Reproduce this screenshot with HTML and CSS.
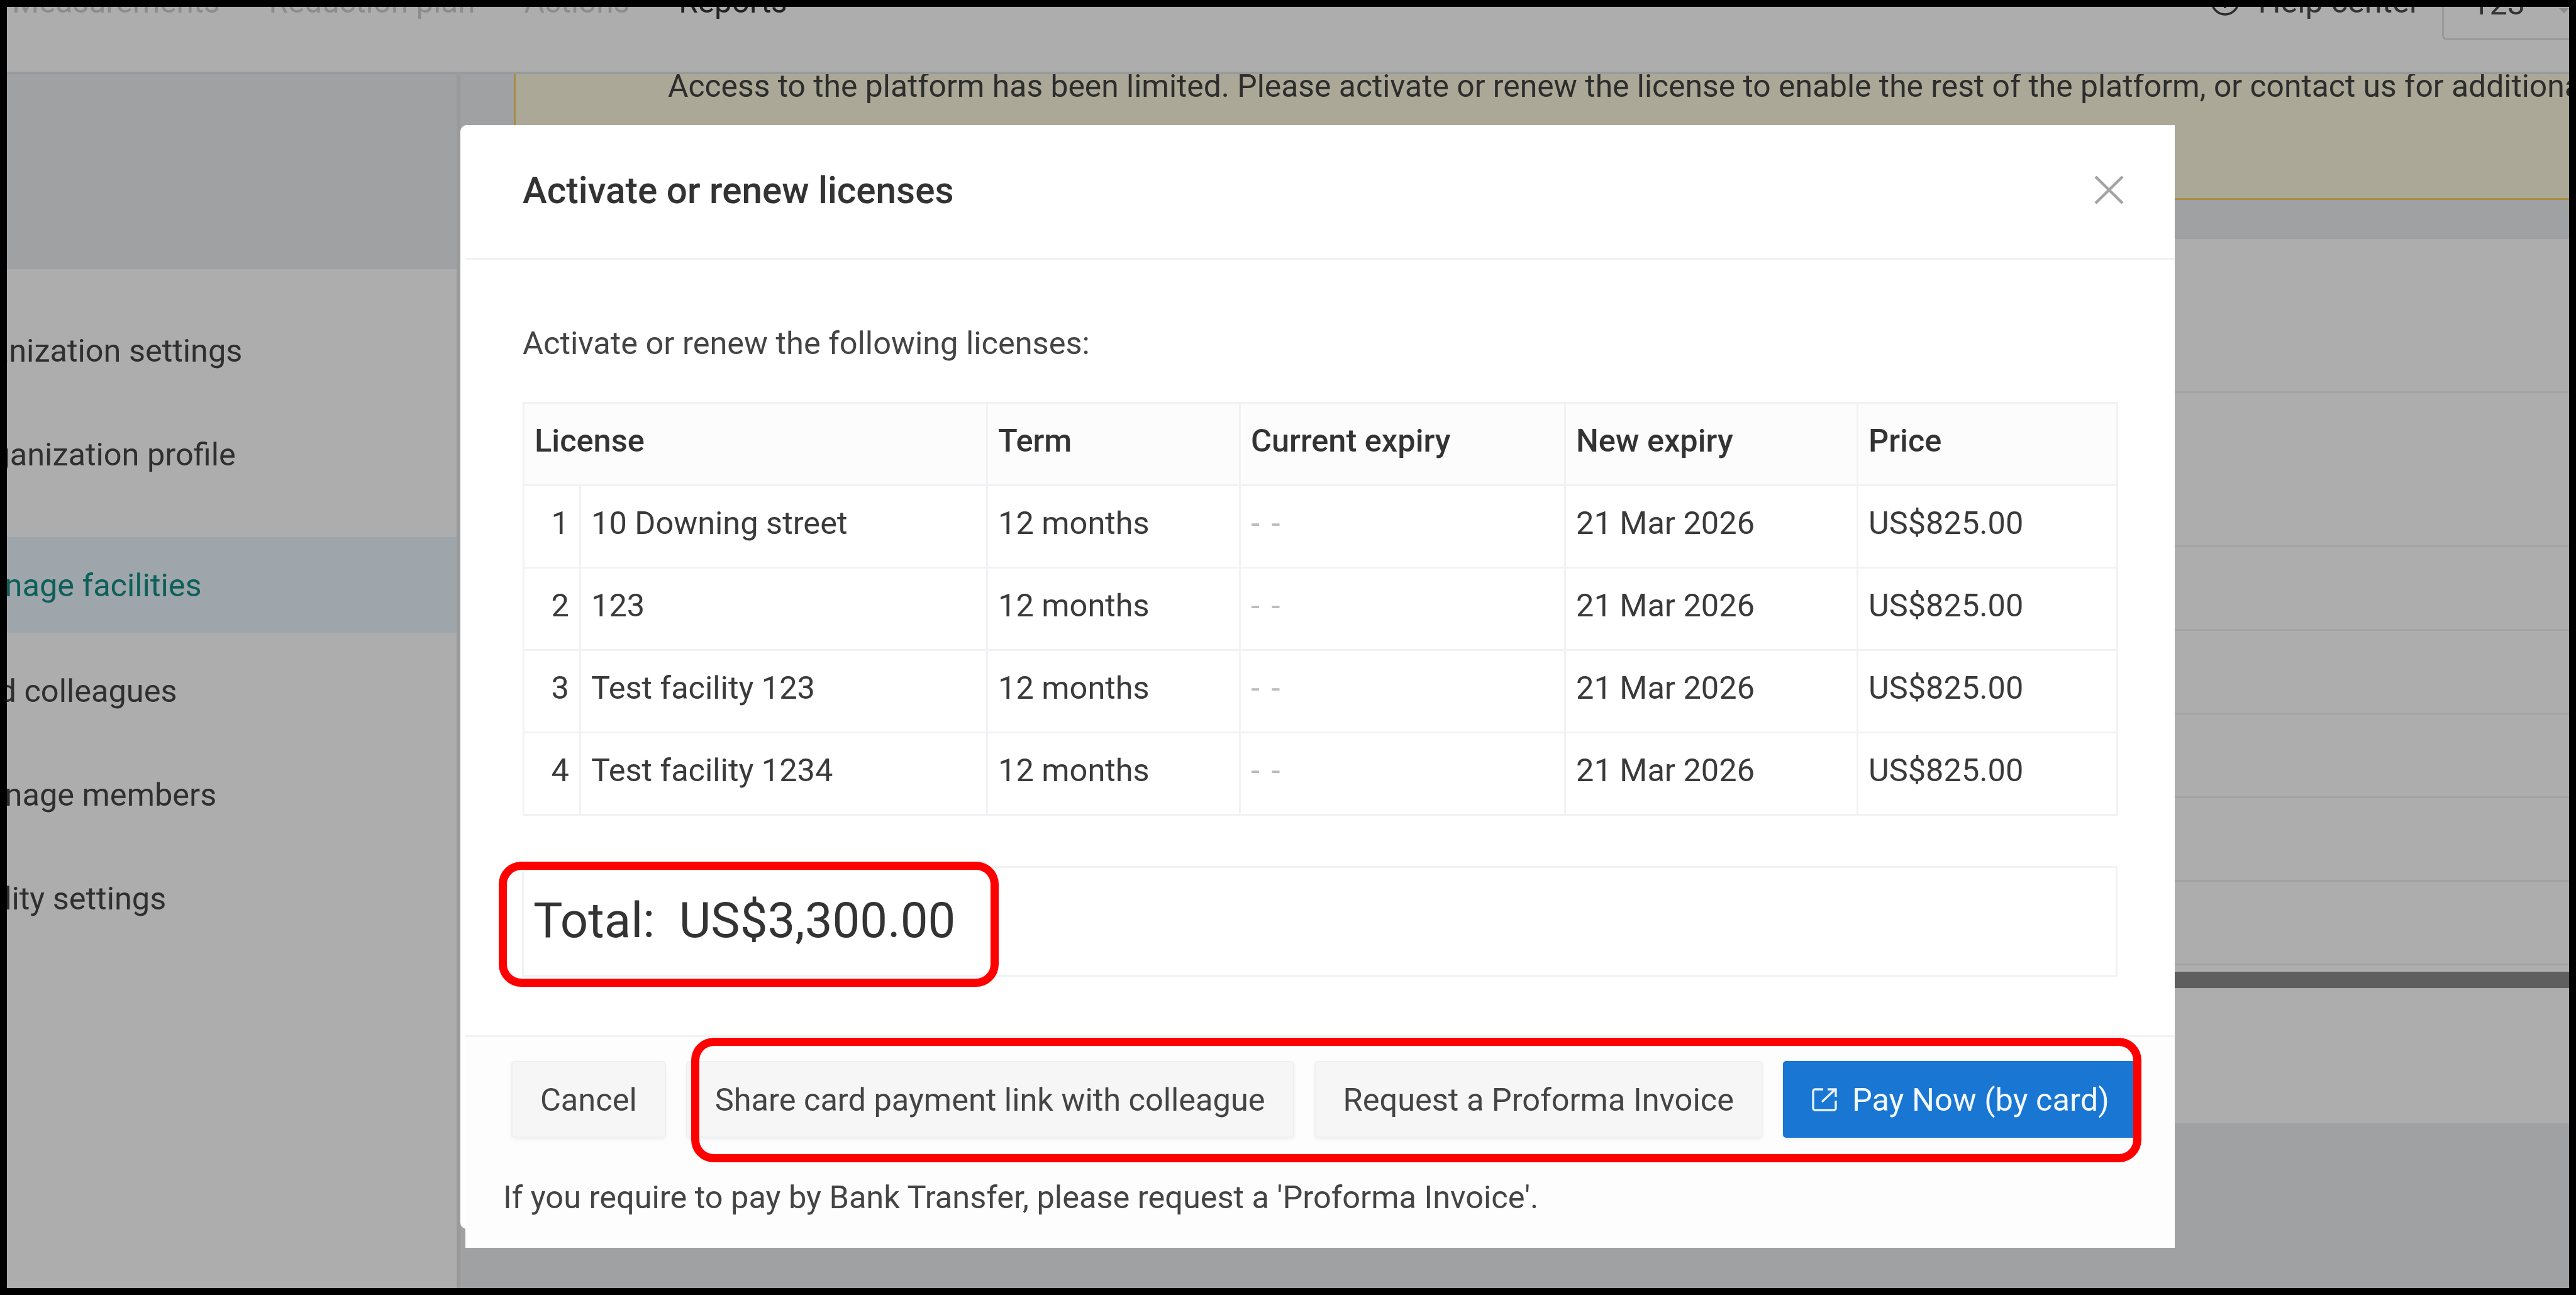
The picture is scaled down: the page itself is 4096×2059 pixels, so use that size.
FILE: index.html
```html
<!DOCTYPE html>
<html lang="en">
<head>
    <meta charset="UTF-8">
    <title>Activate or renew licenses</title>
    <link rel="stylesheet" href="styles.css">
</head>
<body>
    <div class="page">
        <header class="topbar">
            <nav class="topnav">
                <span class="nav-item">Measurements</span>
                <span class="nav-item">Reduction plan</span>
                <span class="nav-item">Actions</span>
                <span class="nav-item current">Reports</span>
                <span class="nav-caret"></span>
            </nav>
            <div class="topright">
                <svg class="help-icon" viewBox="0 0 46 46"><circle cx="23" cy="23" r="21" fill="none" stroke="#2b2b2b" stroke-width="3.5"/><path d="M23 21v13" stroke="#2b2b2b" stroke-width="4"/></svg>
                <span class="help-text">Help center</span>
                <div class="org-select"><span>123</span><span class="nav-caret grey"></span></div>
            </div>
        </header>

        <div class="main">
            <aside class="sidebar">
                <div class="side-head"></div>
                <ul class="side-menu">
                    <li class="side-item heading">Organization settings</li>
                    <li class="side-item">Organization profile</li>
                    <li class="side-item active">Manage facilities</li>
                    <li class="side-item">Add colleagues</li>
                    <li class="side-item">Manage members</li>
                    <li class="side-item heading">Validity settings</li>
                </ul>
            </aside>
            <section class="content">
                <div class="banner">
                    <p>Access to the platform has been limited. Please activate or renew the license to enable the rest of the platform, or contact us for additional support.</p>
                </div>
                <div class="panel">
                    <div class="panel-row tall"></div>
                    <div class="panel-row tall"></div>
                    <div class="panel-row"></div>
                    <div class="panel-row"></div>
                    <div class="panel-row"></div>
                    <div class="panel-row"></div>
                    <div class="panel-row"></div>
                    <div class="scrollbar"></div>
                </div>
            </section>
        </div>

        <div class="modal-back"></div>
        <div class="modal">
            <div class="modal-head">
                <h2>Activate or renew licenses</h2>
                <svg class="close" viewBox="0 0 47 44" preserveAspectRatio="none"><path d="M2 1l43 42M45 1L2 43" stroke="#a3a3a3" stroke-width="4.5" fill="none"/></svg>
            </div>
            <div class="modal-body">
                <p class="intro">Activate or renew the following licenses:</p>
                <table class="licenses">
                    <colgroup>
                        <col class="col-num">
                        <col class="col-name">
                        <col class="col-term">
                        <col class="col-current">
                        <col class="col-new">
                        <col class="col-price">
                    </colgroup>
                    <thead>
                        <tr>
                            <th colspan="2">License</th>
                            <th>Term</th>
                            <th>Current expiry</th>
                            <th>New expiry</th>
                            <th>Price</th>
                        </tr>
                    </thead>
                    <tbody>
                        <tr>
                            <td class="num">1</td>
                            <td>10 Downing street</td>
                            <td>12 months</td>
                            <td class="none">- -</td>
                            <td>21 Mar 2026</td>
                            <td>US$825.00</td>
                        </tr>
                        <tr>
                            <td class="num">2</td>
                            <td>123</td>
                            <td>12 months</td>
                            <td class="none">- -</td>
                            <td>21 Mar 2026</td>
                            <td>US$825.00</td>
                        </tr>
                        <tr>
                            <td class="num">3</td>
                            <td>Test facility 123</td>
                            <td>12 months</td>
                            <td class="none">- -</td>
                            <td>21 Mar 2026</td>
                            <td>US$825.00</td>
                        </tr>
                        <tr>
                            <td class="num">4</td>
                            <td>Test facility 1234</td>
                            <td>12 months</td>
                            <td class="none">- -</td>
                            <td>21 Mar 2026</td>
                            <td>US$825.00</td>
                        </tr>
                    </tbody>
                </table>
                <div class="total">Total:&nbsp; US$3,300.00</div>
            </div>
            <div class="modal-foot">
                <div class="buttons">
                    <button class="btn">Cancel</button>
                    <button class="btn">Share card payment link with colleague</button>
                    <button class="btn">Request a Proforma Invoice</button>
                    <button class="btn primary">
                        <svg class="ext-icon" viewBox="0 0 40 38"><path d="M18 3H5a3 3 0 0 0-3 3v27a3 3 0 0 0 3 3h30a3 3 0 0 0 3-3V21" fill="none" stroke="#e8f1fb" stroke-width="3.4"/><path d="M16 23L36 4M25 3h13v12" fill="none" stroke="#e8f1fb" stroke-width="3.4"/></svg>
                        Pay Now (by card)
                    </button>
                </div>
                <p class="note">If you require to pay by Bank Transfer, please request a 'Proforma Invoice'.</p>
            </div>
        </div>

        <div class="mark mark-total"></div>
        <div class="mark mark-buttons"></div>
    </div>
</body>
</html>
```

FILE: styles.css
```css
html, body {
    margin: 0;
    height: 100%;
    overflow: hidden;
}

body {
    font-family: Roboto, "Liberation Sans", sans-serif;
    color: #3a3a3a;
}

.page {
    position: relative;
    width: 4096px;
    height: 2059px;
    box-sizing: border-box;
    border: 11px solid #000;
    background: #a0a1a3;
    overflow: hidden;
}

/* top bar, pushed up so only the lower part of the text shows */
.topbar {
    height: 107px;
    box-sizing: border-box;
    background: #adadad;
    border-bottom: 4px solid #989b9b;
    display: flex;
    justify-content: space-between;
    overflow: hidden;
}

.topnav {
    display: flex;
    align-items: center;
    gap: 78px;
    height: 20px;
    margin-top: -18px;
    font-size: 49.5px;
    color: #8c8c8c;
    padding-left: 8px;
}

.nav-item { white-space: nowrap; }
.nav-item.current { color: #222; }

.nav-caret {
    width: 0;
    height: 0;
    margin-left: -33px;
    border: 8px solid transparent;
    border-top-color: #333;
    border-bottom: 0;
}

.topright {
    display: flex;
    align-items: flex-start;
    margin-top: -30px;
    font-size: 50.5px;
    line-height: 44px;
    color: #333;
}

.help-icon {
    width: 46px;
    height: 46px;
    margin: -2px 30px 0 0;
}

.help-text {
    white-space: nowrap;
    margin-right: 35px;
}

.org-select {
    width: 202px;
    height: 83px;
    box-sizing: border-box;
    padding-left: 44px;
    border: 3px solid #999;
    border-right: 0;
    border-radius: 8px 0 0 8px;
    display: flex;
    align-items: flex-start;
}

.org-select .nav-caret.grey {
    margin: 29px 0 0 54px;
    border-top-color: #8c8c8c;
}

.main {
    display: flex;
    height: 1930px;
}

.sidebar {
    width: 715px;
    flex: none;
    background: #adadad;
    border-right: 6px solid #9a9a9a;
    overflow: hidden;
}

.side-head {
    height: 310px;
    background: #a0a1a3;
}

.side-menu {
    list-style: none;
    margin: 0;
    padding: 47px 0 0;
    font-size: 50.5px;
    color: #2f2f2f;
}

.side-item {
    height: 165px;
    display: flex;
    align-items: center;
    white-space: nowrap;
    margin-left: -75px;
}

.side-item.heading { margin-left: -104px; }

.side-item.active {
    height: 152px;
    margin-top: 49px;
    margin-bottom: 10px;
    color: #0d5f5a;
    background: #9ea6ab;
}

.content {
    flex: 1;
    min-width: 0;
    overflow: hidden;
}

.banner {
    height: 200px;
    box-sizing: border-box;
    margin-left: 85px;
    padding-left: 242px;
    background: #aba897;
    border-left: 3px solid #a88d45;
    border-bottom: 3px solid #a88d45;
    font-size: 49.8px;
    color: #2d2d2d;
    overflow: hidden;
}

.banner p {
    margin: -13px 0 0;
    white-space: nowrap;
    line-height: 64px;
}

.panel {
    margin-top: 62px;
    height: 1406px;
    background: #adadad;
}

.panel-row {
    height: 133px;
    box-sizing: border-box;
    border-bottom: 3px solid #a3a3a3;
}

.panel-row.tall { height: 245px; }

.scrollbar {
    height: 26px;
    margin-top: 10px;
    background: #5f5f5f;
}

/* dialog */
.modal-back {
    position: absolute;
    left: 721px;
    top: 188px;
    width: 20px;
    height: 1755px;
    background: #fff;
    border-radius: 10px 0 0 10px;
}

.modal {
    position: absolute;
    left: 729px;
    top: 188px;
    width: 2718px;
    height: 1785px;
    background: #fff;
    display: flex;
    flex-direction: column;
}

.modal-head {
    height: 214px;
    box-sizing: border-box;
    border-bottom: 3px solid #f0f2f4;
    display: flex;
    align-items: center;
    justify-content: space-between;
    padding: 0 81px 3px 91px;
}

.modal-head h2 {
    margin: 0;
    font-size: 58.4px;
    font-weight: 500;
    color: #333;
}

.close {
    width: 47px;
    height: 44px;
    margin-bottom: 3px;
}

.modal-body {
    height: 1236px;
    box-sizing: border-box;
    padding: 0 91px;
    border-bottom: 3px solid #f0f2f4;
}

.intro {
    margin: 0;
    height: 226px;
    padding-top: 103px;
    box-sizing: border-box;
    line-height: 60px;
    font-size: 50.5px;
    color: #444;
}

.licenses {
    width: 2534px;
    border-collapse: collapse;
    table-layout: fixed;
    font-size: 50.5px;
}

.col-num { width: 90px; }
.col-name { width: 647px; }
.col-term { width: 402px; }
.col-current { width: 517px; }
.col-new { width: 465px; }
.col-price { width: 413px; }

.licenses th, .licenses td {
    height: 131px;
    padding: 0 16px 11px;
    border: 3px solid #f0f2f4;
    text-align: left;
    box-sizing: border-box;
    white-space: nowrap;
}

.licenses th {
    background: #fcfcfc;
    font-weight: 500;
    color: #333;
}

.licenses td.num {
    text-align: right;
    padding-right: 16px;
    padding-left: 0;
}

.licenses td.none { color: #bbb; letter-spacing: 3px; }

.total {
    margin: 80px 0 0 -1px;
    width: 2537px;
    height: 176px;
    box-sizing: border-box;
    border: 3px solid #f0f2f4;
    display: flex;
    align-items: center;
    padding: 0 0 3px 15px;
    font-size: 78px;
    color: #333;
}

.modal-foot {
    flex: 1;
    background: #fdfdfd;
}

.buttons {
    display: flex;
    gap: 32px;
    padding: 38px 0 0 73px;
}

.btn {
    height: 122px;
    padding: 0 44px;
    border: 2px solid #eff0f2;
    border-radius: 5px;
    background: #f6f6f6;
    font-family: inherit;
    font-size: 50.5px;
    color: #444;
    white-space: nowrap;
    box-shadow: 0 3px 6px rgba(0, 0, 0, 0.05);
    display: flex;
    align-items: center;
}

.btn.primary {
    background: #1976d2;
    border-color: #1976d2;
    color: #f4f9fe;
}

.ext-icon {
    width: 40px;
    height: 38px;
    margin-right: 24px;
}

.note {
    margin: 65px 0 0 60px;
    font-size: 50.5px;
    line-height: 60px;
    color: #444;
}

/* red annotation boxes on top of the shot */
.mark {
    position: absolute;
    box-sizing: border-box;
    border: 13px solid #f00;
    border-radius: 36px;
}

.mark-total {
    left: 782px;
    top: 1359px;
    width: 795px;
    height: 199px;
}

.mark-buttons {
    left: 1088px;
    top: 1639px;
    width: 2306px;
    height: 198px;
}
```
